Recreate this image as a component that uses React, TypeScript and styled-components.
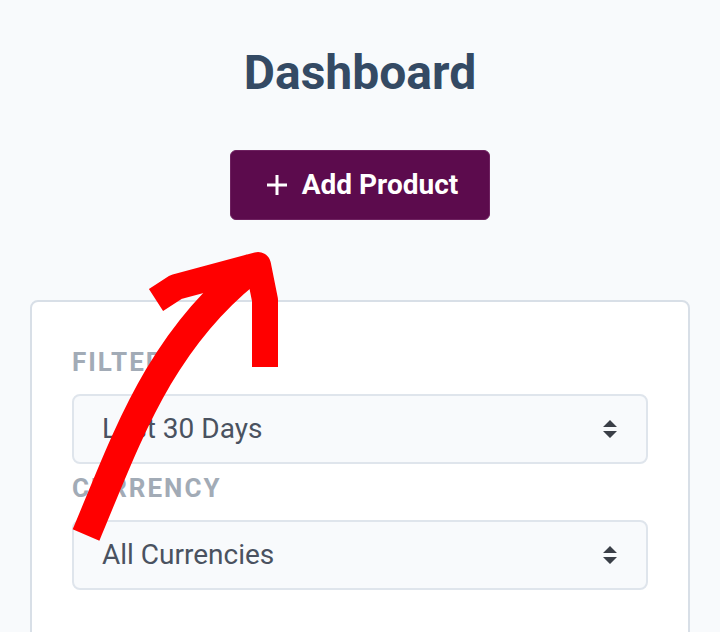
import React from 'react';
import styled, { createGlobalStyle } from 'styled-components';

const GlobalStyle = createGlobalStyle`
  html, body {
    margin: 0;
    padding: 0;
    background: #f8fafc;
    font-family: Roboto, 'Liberation Sans', Arial, sans-serif;
  }
  * {
    box-sizing: border-box;
  }
`;

const Page = styled.div`
  position: relative;
  display: flex;
  flex-direction: column;
  align-items: center;
  padding: 44px 30px 0;
  min-height: 632px;
  overflow: hidden;
`;

const Title = styled.h1`
  margin: 0;
  font-size: 48px;
  line-height: 57.6px;
  font-weight: 700;
  color: #344a64;
`;

const PrimaryButton = styled.button`
  margin-top: 48px;
  height: 70px;
  padding: 0 31px 0 35px;
  display: flex;
  align-items: center;
  gap: 14px;
  background: #5c0b4d;
  border: 1px solid #6e2160;
  border-radius: 6px;
  color: #ffffff;
  font-family: Roboto, 'Liberation Sans', Arial, sans-serif;
  font-size: 28px;
  font-weight: 700;
  cursor: pointer;
`;

const Card = styled.div`
  margin-top: 80px;
  width: 100%;
  background: #ffffff;
  border: 2px solid #d8dfe7;
  border-radius: 8px;
  padding: 45px 40px 60px;
  display: flex;
  flex-direction: column;
  gap: 9px;
`;

const Field = styled.div`
  display: flex;
  flex-direction: column;
`;

const Label = styled.label`
  margin: 0 0 16px;
  font-size: 26px;
  line-height: 1.2;
  font-weight: 700;
  letter-spacing: 2px;
  text-transform: uppercase;
  color: #a2abb6;
`;

const SelectWrap = styled.div`
  position: relative;
`;

const Select = styled.select`
  width: 100%;
  height: 70px;
  padding: 0 60px 0 28px;
  appearance: none;
  -webkit-appearance: none;
  background: #f8fafc;
  border: 2px solid #dfe5ec;
  border-radius: 8px;
  font-family: Roboto, 'Liberation Sans', Arial, sans-serif;
  font-size: 28px;
  color: #4a5260;
  outline: none;
`;

const SortIcon = styled.svg`
  position: absolute;
  right: 30px;
  top: 50%;
  transform: translateY(-50%);
  pointer-events: none;
`;

const Annotation = styled.svg`
  position: absolute;
  left: 0;
  top: 0;
  pointer-events: none;
`;

const fields = [
  { label: 'Filter', options: ['Last 30 Days', 'Last 7 Days', 'Last 90 Days'] },
  { label: 'Currency', options: ['All Currencies', 'USD', 'EUR'] },
];

const App: React.FC = () => {
  return (
    <>
      <GlobalStyle />
      <Page>
        <Title>Dashboard</Title>
        <PrimaryButton>
          <svg width="22" height="22" viewBox="0 0 22 22">
            <path d="M11 1v20M1 11h20" stroke="#fff" strokeWidth="3" fill="none" />
          </svg>
          Add Product
        </PrimaryButton>
        <Card>
          {fields.map((f) => (
            <Field key={f.label}>
              <Label>{f.label}</Label>
              <SelectWrap>
                <Select defaultValue={f.options[0]}>
                  {f.options.map((o) => (
                    <option key={o}>{o}</option>
                  ))}
                </Select>
                <SortIcon width="16" height="18" viewBox="0 0 16 18">
                  <path d="M8 0L15 7H1z M1 11h14L8 18z" fill="#3a3f47" />
                </SortIcon>
              </SelectWrap>
            </Field>
          ))}
        </Card>

        {/* red hand-drawn arrow pointing at the button */}
        <Annotation width="720" height="632" viewBox="0 0 720 632">
          <path
            d="M86 535 C 126 440, 160 338, 255 266"
            stroke="#ff0000"
            strokeWidth="29"
            fill="none"
          />
          <path
            d="M156 300 L176 287 L258 265 L265 300 L265 367"
            stroke="#ff0000"
            strokeWidth="26"
            strokeLinejoin="round"
            fill="none"
          />
        </Annotation>
      </Page>
    </>
  );
};

export default App;
